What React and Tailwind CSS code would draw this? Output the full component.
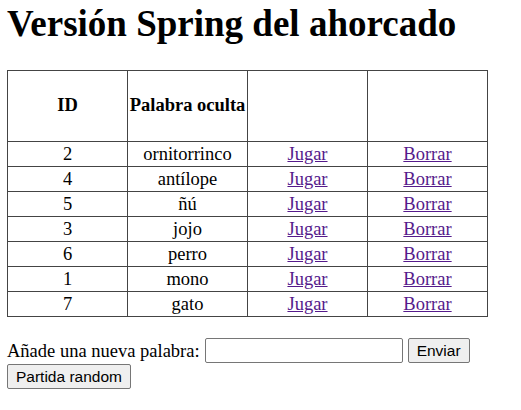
export default function App() {
  const palabras = [
    { id: 2, palabra: 'ornitorrinco' },
    { id: 4, palabra: 'antílope' },
    { id: 5, palabra: 'ñú' },
    { id: 3, palabra: 'jojo' },
    { id: 6, palabra: 'perro' },
    { id: 1, palabra: 'mono' },
    { id: 7, palabra: 'gato' },
  ];

  return (
    <div className="bg-white min-h-screen px-[7px] text-black font-['Liberation_Serif',serif] text-[18.5px]">
      <h1 className="text-[37px] font-bold leading-[37px] pt-[5px] mb-[28px]">Versión Spring del ahorcado</h1>

      {/* Tabla de palabras */}
      <table className="w-[481px] border-collapse border border-[#444] table-fixed">
        <thead>
          <tr className="h-[71px]">
            <th className="w-[120px] border border-[#444] font-bold p-0">ID</th>
            <th className="w-[120px] border border-[#444] font-bold p-0">Palabra oculta</th>
            <th className="w-[120px] border border-[#444]"></th>
            <th className="w-[120px] border border-[#444]"></th>
          </tr>
        </thead>
        <tbody>
          {palabras.map((p) => (
            <tr key={p.id} className="h-[25px]">
              <td className="border border-[#444] text-center p-0 leading-[22px]">{p.id}</td>
              <td className="border border-[#444] text-center p-0 leading-[22px]">{p.palabra}</td>
              <td className="border border-[#444] text-center p-0 leading-[22px]">
                <a href="#" className="underline text-[#551a8b]">Jugar</a>
              </td>
              <td className="border border-[#444] text-center p-0 leading-[22px]">
                <a href="#" className="underline text-[#551a8b]">Borrar</a>
              </td>
            </tr>
          ))}
        </tbody>
      </table>

      {/* Formulario */}
      <form className="mt-[21px]" onSubmit={(e) => e.preventDefault()}>
        <div className="flex items-center h-[25px]">
          <label className="leading-[22px]">Añade una nueva palabra:</label>
          <input
            type="text"
            className="ml-[5px] w-[198px] h-[25px] border border-[#767676] rounded-[2px] bg-white px-[2px]"
          />
          <button
            type="submit"
            className="ml-[5px] h-[25px] w-[62px] bg-[#efefef] border border-[#767676] rounded-[2px] font-['Liberation_Sans',sans-serif] text-[15.5px]"
          >
            Enviar
          </button>
        </div>
        <button
          type="button"
          className="mt-[1px] h-[25px] w-[124px] bg-[#efefef] border border-[#767676] rounded-[2px] font-['Liberation_Sans',sans-serif] text-[15.5px]"
        >
          Partida random
        </button>
      </form>
    </div>
  );
}
